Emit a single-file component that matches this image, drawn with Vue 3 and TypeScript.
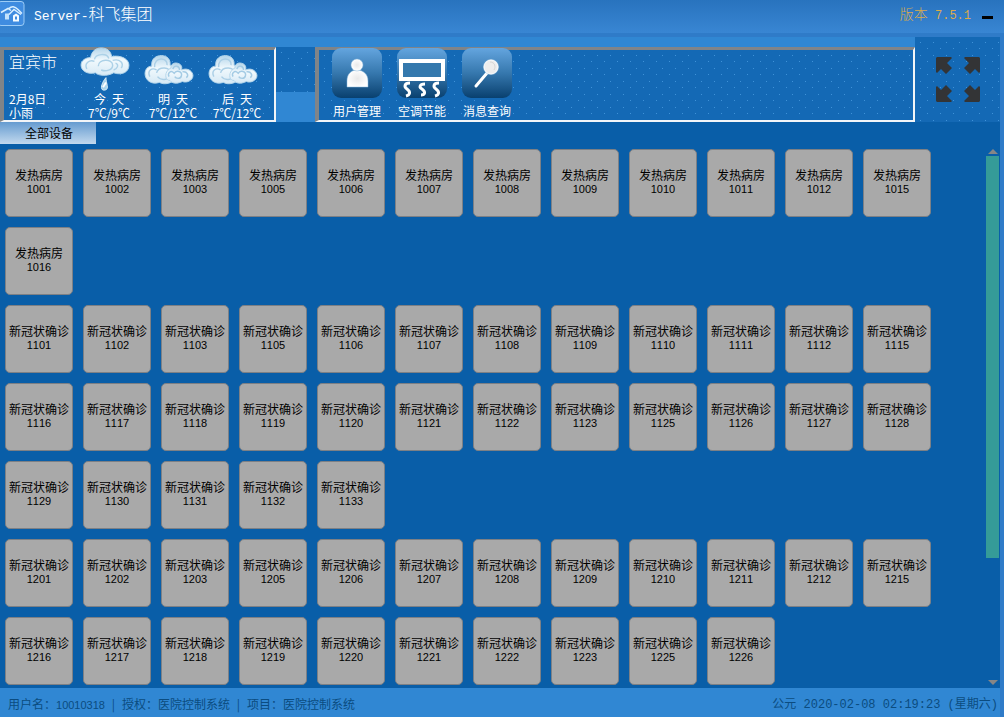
<script setup lang="ts">
interface Forecast {
  label: string
  temp: string
  rain: boolean
}

interface Tool {
  id: 'user' | 'air' | 'search'
  label: string
}

interface RoomGroup {
  name: string
  rooms: number[]
}

const forecasts: Forecast[] = [
  { label: '今\u2002天', temp: '7℃/9℃', rain: true },
  { label: '明\u2002天', temp: '7℃/12℃', rain: false },
  { label: '后\u2002天', temp: '7℃/12℃', rain: false },
]

const tools: Tool[] = [
  { id: 'user', label: '用户管理' },
  { id: 'air', label: '空调节能' },
  { id: 'search', label: '消息查询' },
]

// Room numbers 4, 13, 14 and 24 are not in use on any floor.
function rooms(floor: number, last: number): number[] {
  const list: number[] = []
  for (let n = 1; n <= last; n++) {
    if (n === 4 || n === 13 || n === 14 || n === 24) continue
    list.push(floor + n)
  }
  return list
}

const groups: RoomGroup[] = [
  { name: '发热病房', rooms: rooms(1000, 16) },
  { name: '新冠状确诊', rooms: rooms(1100, 33) },
  { name: '新冠状确诊', rooms: rooms(1200, 26) },
]
</script>

<template>
  <div class="app">
    <header class="titlebar">
      <svg class="logo" viewBox="0 0 25 25" aria-hidden="true">
        <rect x="-2" y="1" width="26" height="24" rx="3" fill="#3f8ce0" stroke="#9cccf6" />
        <path d="M1 12 L8 8 L11 10 M9 14 L14 9 L21 14 M9 8 Q13 4 18 9 L22 13" fill="none" stroke="#d9efff" stroke-width="1.5" />
        <path d="M5 13h4v6H5z" fill="#c2e2fc" />
        <path d="M13 15l3-2 3 2v6h-6z" fill="#f4fbff" />
        <path d="M15 16h2v3h-2z" fill="#3f8ce0" />
      </svg>
      <h1 class="title"><span class="latin">Server-</span>科飞集团</h1>
      <span class="version">版本<span class="latin">&nbsp;7.5.1</span></span>
      <button class="minimize" type="button" aria-label="最小化"></button>
    </header>

    <div class="body">
      <div class="toolbar">
        <section class="panel weather">
          <div class="place">
            <span class="city">宜宾市</span>
            <span>2月8日</span>
            <span>小雨</span>
          </div>
          <div v-for="day in forecasts" :key="day.label" class="day">
            <svg class="cloud" viewBox="0 0 50 48" aria-hidden="true">
              <defs>
                <linearGradient id="puff" x1="0" y1="0" x2="0" y2="1">
                  <stop offset="0" stop-color="#b4d5ea" />
                  <stop offset="0.45" stop-color="#f1f9fd" />
                  <stop offset="1" stop-color="#d6e9f5" />
                </linearGradient>
              </defs>
              <g v-if="day.rain" stroke="#b4d5ea" fill="url(#puff)">
                <path d="M10 12 C11 5 16 2 21 2 C27 2 31 5 32 11 C42 9 50 14 50 20 C50 27 43 31 34 28 C27 32 18 31 15 28 C7 30 0 26 0 20 C0 15 5 12 10 12Z" />
                <path d="M14 14 C15 8 27 7 29 13 M6 24 C3 18 9 14 14 16 M18 21 C18 13 33 13 33 20 C33 25 26 27 21 25 M33 15 C41 13 45 18 42 23 M36 18 C40 19 38 24 34 25" fill="none" stroke-width="1.5" stroke="#acd1e7" />
                <path d="M26 33 C26 39 30 45 25 46 C19 47 21 39 26 33Z" stroke="#d9ecf6" fill="#a9d4ec" />
                <path d="M23 43 L26 38" stroke="#fff" stroke-width="2" />
              </g>
              <g v-else stroke="#b4d5ea" fill="url(#puff)">
                <path d="M7 21 C6 13 12 10 17 10 C23 10 27 14 26 20 C33 20 35 27 33 33 C29 39 20 41 15 38 C6 41 0 35 0 29 C0 24 3 21 7 21Z" />
                <path d="M10 22 C9 11 24 11 23 20 M5 32 C2 26 7 22 12 25 M12 28 C14 21 27 21 27 29 C27 35 17 37 13 32" fill="none" stroke-width="1.5" stroke="#abcfe6" />
                <path d="M27 23 C27 19 30 17 34 18 C38 19 39 22 38 25 C45 22 50 27 50 31 C50 36 43 39 39 37 C33 40 28 39 26 36 C20 36 20 26 27 23Z" />
                <path d="M29 24 C31 19 36 21 36 25 M25 32 C23 28 27 25 30 28 M30 29 C33 24 39 27 38 31 C37 35 32 34 31 32 M39 27 C44 26 46 31 43 33" fill="none" stroke-width="1.5" stroke="#a4cbe4" />
              </g>
            </svg>
            <span>{{ day.label }}</span>
            <span>{{ day.temp }}</span>
          </div>
        </section>

        <div class="divider dots"></div>

        <nav class="panel tools">
          <button v-for="tool in tools" :key="tool.id" class="tool" type="button">
            <svg class="tool-icon" viewBox="0 0 50 50" aria-hidden="true">
              <defs>
                <linearGradient id="tile" x1="0" y1="0" x2="0" y2="1">
                  <stop offset="0" stop-color="#64a5df" />
                  <stop offset="0.5" stop-color="#3678ae" />
                  <stop offset="1" stop-color="#09406f" />
                </linearGradient>
                <radialGradient id="white">
                  <stop offset="0" stop-color="#e9e9e9" />
                  <stop offset="1" stop-color="#ffffff" />
                </radialGradient>
              </defs>
              <rect width="50" height="50" rx="9" fill="url(#tile)" />
              <g v-if="tool.id === 'user'" fill="url(#white)" stroke="#8dbce0" stroke-opacity="0.5">
                <path d="M15 39 V33 C15 26 19 22 25 22 C31 22 36 26 36 33 V39Z" />
                <circle cx="25" cy="17" r="6" />
              </g>
              <g v-else-if="tool.id === 'air'" fill="none" stroke="#fff">
                <rect x="4" y="13" width="42" height="18" stroke-width="4" fill="#3478ad" />
                <path d="M13 35 C7 35 7 39 10 41 C14 44 13 47 9 48 M28 36 C22 36 22 40 25 41 C29 44 28 47 24 47 M42 35 C36 35 36 39 39 41 C43 44 42 47 38 48" stroke-width="3" />
              </g>
              <g v-else stroke="#fff">
                <path d="M14 38 L25 25" stroke-width="3" stroke-linecap="round" />
                <circle cx="29" cy="19" r="8" fill="#8dbce0" stroke="none" opacity="0.6" />
                <circle cx="29" cy="19" r="7" fill="#ededed" stroke-width="1" />
                <path d="M28 14 C33 14 34 19 32 22" fill="none" stroke="#d5d5d5" />
              </g>
            </svg>
            <span>{{ tool.label }}</span>
          </button>
        </nav>

        <div class="expand dots">
          <button class="fullscreen" type="button" aria-label="全屏">
            <svg viewBox="0 0 46 45" aria-hidden="true">
              <g fill="#333436">
                <path id="arrow" d="M2 0 H16 L17 1 L12 6 L17 11 L11 17 L6 12 L2 16 L1 15 V1Z" />
                <use href="#arrow" transform="translate(46 0) scale(-1 1)" />
                <use href="#arrow" transform="translate(0 45) scale(1 -1)" />
                <use href="#arrow" transform="translate(46 45) scale(-1 -1)" />
              </g>
            </svg>
          </button>
        </div>
      </div>

      <main class="main">
        <div class="tabs">
          <button class="tab" type="button">全部设备</button>
        </div>
        <div class="scroller">
          <div class="groups">
            <section v-for="(group, index) in groups" :key="index" class="group">
              <button v-for="room in group.rooms" :key="room" class="room" type="button">
                <span>{{ group.name }}</span>
                <span class="number">{{ room }}</span>
              </button>
            </section>
          </div>
          <div class="scrollbar" aria-hidden="true">
            <svg class="arrow" viewBox="0 0 10 5"><path d="M0 5 L5 0 L10 5Z" fill="#868686" /></svg>
            <div class="track"><div class="thumb"></div></div>
            <svg class="arrow" viewBox="0 0 10 5"><path d="M0 0 H10 L5 5Z" fill="#868686" /></svg>
          </div>
        </div>
      </main>

      <footer class="status">
        <span>用户名：<span class="number">10010318</span><span class="bar">|</span>授权：医院控制系统<span class="bar">|</span>项目：医院控制系统</span>
        <time class="clock" datetime="2020-02-08T02:19:23">公元 2020-02-08 02:19:23 (星期六)</time>
      </footer>
    </div>
  </div>
</template>

<style>
body {
  margin: 0;
  background: #095ea8;
}
</style>

<style scoped>
.app {
  display: flex;
  flex-direction: column;
  min-height: 100vh;
  font-family: "Noto Sans CJK SC", sans-serif;
  font-size: 12px;
  line-height: 14px;
  color: #fff;
}

.app * {
  box-sizing: border-box;
}

button {
  margin: 0;
  padding: 0;
  border: 0;
  background: none;
  color: inherit;
  font: inherit;
  cursor: pointer;
}

svg {
  display: block;
}

.titlebar {
  display: flex;
  align-items: center;
  height: 37px;
  padding: 0 11px 4px 0;
  border-bottom: 4px solid #2f7bc8;
  background: linear-gradient(#2873be, #3986d3);
}

.logo {
  width: 25px;
  height: 26px;
  margin-bottom: 4px;
}

.title {
  flex: 1;
  margin: 0 0 0 9px;
  font-size: 16px;
  font-weight: 300;
  line-height: 20px;
}

.title .latin {
  font-family: "Liberation Mono", monospace;
  font-size: 13px;
}

.version {
  color: #dcab4c;
  font-size: 14px;
  font-weight: 300;
  line-height: 20px;
}

.version .latin {
  font-family: "Liberation Mono", monospace;
  font-size: 12px;
}

.minimize {
  width: 11px;
  height: 3px;
  margin: 5px 0 0 11px;
  background: #000;
}

.body {
  display: flex;
  flex: 1;
  flex-direction: column;
  border-right: 4px solid #2f7bc8;
}

.toolbar {
  display: flex;
  height: 85px;
  background: #3087d3;
}

.dots,
.panel {
  background-color: #1469b5;
  background-image:
    conic-gradient(from 270deg at 1px 1px, #3f92d8 90deg, transparent 0),
    conic-gradient(from 270deg at 1px 1px, #3f92d8 90deg, transparent 0);
  background-position: 5px 5px, 12px 11px;
  background-size: 13px 13px;
}

.panel {
  display: flex;
  margin-top: 10px;
  border: solid;
  border-width: 3px 2px 2px 4px;
  border-color: #808488 #f2f5f8 #f2f5f8 #808488;
}

.weather {
  width: 276px;
}

.place {
  display: flex;
  flex-direction: column;
  width: 73px;
  padding-left: 5px;
}

.city {
  margin-bottom: 20px;
  font-size: 16px;
  font-weight: 300;
  line-height: 22px;
}

.day {
  display: flex;
  flex-direction: column;
  align-items: center;
  width: 64px;
}

.cloud {
  width: 50px;
  height: 48px;
  margin: -4px 8px 0 0;
}

.divider {
  width: 39px;
  height: 45px;
  margin-top: 10px;
}

.tools {
  flex: 1;
  gap: 15px;
  padding-left: 13px;
}

.tool {
  display: flex;
  flex-direction: column;
  align-items: center;
  gap: 6px;
  width: 50px;
  margin-top: -2px;
}

.tool-icon {
  width: 50px;
  height: 50px;
}

.expand {
  display: flex;
  align-items: center;
  justify-content: center;
  width: 85px;
}

.fullscreen {
  width: 46px;
}

.main {
  display: flex;
  flex: 1;
  flex-direction: column;
  background: #095ea8;
}

.tabs {
  display: flex;
}

.tab {
  width: 96px;
  height: 22px;
  padding-left: 2px;
  background: linear-gradient(#659bd0, #c2d9ee);
  color: #000;
}

.scroller {
  display: flex;
  flex: 1;
  padding: 5px 1px 3px 5px;
}

.groups {
  display: flex;
  flex: 1;
  flex-direction: column;
  gap: 10px;
}

.group {
  display: flex;
  flex-wrap: wrap;
  gap: 10px;
}

.room {
  display: flex;
  flex-direction: column;
  align-items: center;
  justify-content: center;
  width: 68px;
  height: 68px;
  padding-bottom: 2px;
  border: 1px solid #7d8085;
  border-radius: 5px;
  background: #a9a9a9;
  color: #000;
  white-space: nowrap;
}

.number {
  font-family: "Liberation Sans", sans-serif;
  font-size: 11px;
  font-kerning: none;
}

.scrollbar {
  display: flex;
  flex-direction: column;
  align-items: center;
  gap: 2px;
  width: 13px;
}

.arrow {
  width: 10px;
  height: 5px;
}

.track {
  flex: 1;
  width: 100%;
}

.thumb {
  height: 77%;
  background: #359b98;
}

.status {
  display: flex;
  align-items: center;
  justify-content: space-between;
  height: 29px;
  padding: 4px 2px 0 8px;
  background: #3087d3;
  color: #0b4c80;
}

.bar {
  display: inline-block;
  width: 17px;
  text-align: center;
}

.clock {
  font-family: "Liberation Mono", "Noto Sans CJK SC", monospace;
}
</style>
